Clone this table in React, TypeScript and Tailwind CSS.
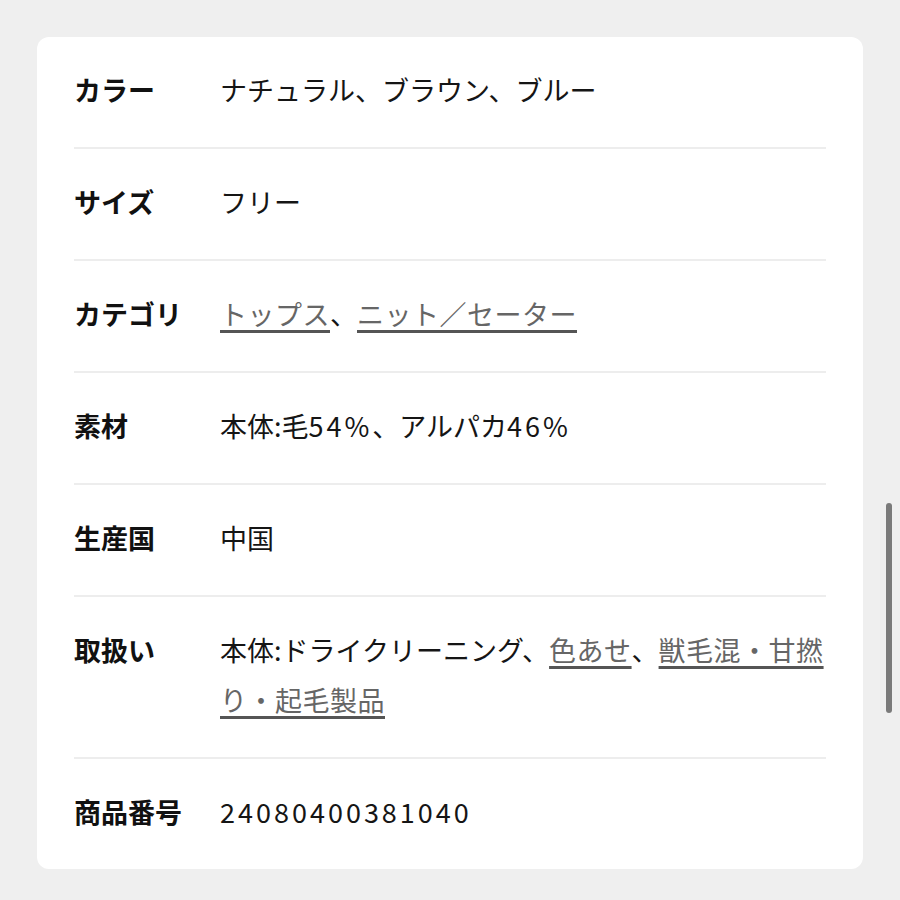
import React from "react";

type Part = { text: string; link?: boolean; num?: boolean };

const rows: { label: string; value: Part[] }[] = [
  { label: "カラー", value: [{ text: "ナチュラル、ブラウン、ブルー" }] },
  { label: "サイズ", value: [{ text: "フリー" }] },
  {
    label: "カテゴリ",
    value: [
      { text: "トップス", link: true },
      { text: "、" },
      { text: "ニット／セーター", link: true },
    ],
  },
  {
    label: "素材",
    value: [
      { text: "本体:毛" },
      { text: "54%", num: true },
      { text: "、アルパカ" },
      { text: "46%", num: true },
    ],
  },
  { label: "生産国", value: [{ text: "中国" }] },
  {
    label: "取扱い",
    value: [
      { text: "本体:ドライクリーニング、" },
      { text: "色あせ", link: true },
      { text: "、" },
      { text: "獣毛混・甘撚り・起毛製品", link: true },
    ],
  },
  { label: "商品番号", value: [{ text: "24080400381040", num: true }] },
];

const App: React.FC = () => {
  return (
    <div
      className="relative min-h-screen bg-[#efefef] px-[37px] pt-[37px] pb-[30px]"
      style={{ fontFamily: '"Noto Sans CJK JP", "Noto Sans", sans-serif' }}
    >
      <div className="rounded-[12px] bg-white px-[37px]">
        {rows.map((row, i) => (
          <div key={row.label}>
            {i > 0 && <div className="h-[2px] bg-[#ededed]" />}
            <div className="flex pt-[28px] pb-[32px] text-[27px] leading-[50px] text-[#151515]">
              <div className="w-[146px] shrink-0 font-bold text-[#111]">{row.label}</div>
              <div className="flex-1">
                {row.value.map((p, j) =>
                  p.link ? (
                    <span
                      key={j}
                      className="tracking-[0.5px] text-[#666] underline decoration-[#555] decoration-[2.5px] underline-offset-[5px]"
                    >
                      {p.text}
                    </span>
                  ) : (
                    <span key={j} className={p.num ? "tracking-[3px]" : ""}>
                      {p.text}
                    </span>
                  )
                )}
              </div>
            </div>
          </div>
        ))}
      </div>

      {/* scrollbar thumb */}
      <div className="absolute left-[886px] top-[503px] h-[210px] w-[6px] rounded-full bg-[#7a7a7a]" />
    </div>
  );
};

export default App;
